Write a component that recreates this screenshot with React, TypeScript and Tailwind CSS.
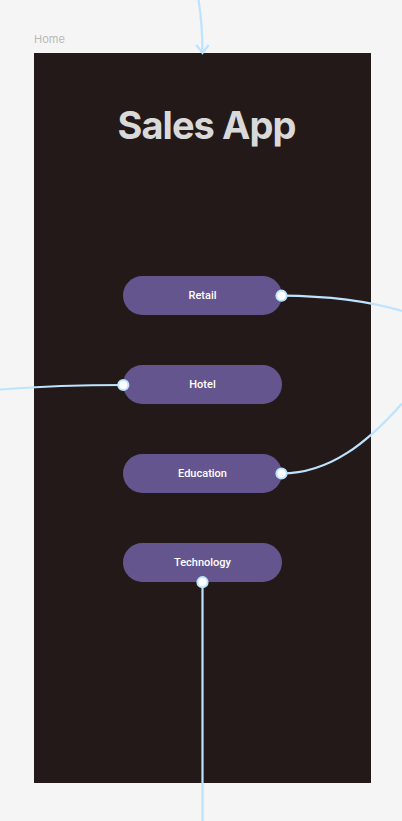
const categories = ["Retail", "Hotel", "Education", "Technology"];

const anchors = [
  { id: "retail", x: 281.5, y: 295.7 },
  { id: "hotel", x: 123.3, y: 385 },
  { id: "education", x: 281.5, y: 473.5 },
  { id: "technology", x: 202.5, y: 582.2 },
];

function Connectors() {
  return (
    <svg
      aria-hidden="true"
      className="pointer-events-none absolute top-0 left-1/2 h-[821px] w-[402px] -translate-x-1/2"
      viewBox="0 0 402 821"
      fill="none"
    >
      <g stroke="#bde3ff" strokeWidth="2.2">
        <path d="M198.5 0C201 15 202.5 32 202.5 53" />
        <path d="M196.3 45L202.5 53L208.7 45" />
        <path d="M281.5 295.7C325 296 368 301 402 311" />
        <path d="M123.3 385C80 385 40 386.5 0 389.5" />
        <path d="M281.5 473.5C330 473.5 368 442 402 403.5" />
        <path d="M202.5 582V821" />
      </g>
      {anchors.map((anchor) => (
        <circle
          key={anchor.id}
          cx={anchor.x}
          cy={anchor.y}
          r="5.1"
          fill="#ffffff"
          stroke="#bde3ff"
          strokeWidth="2"
        />
      ))}
    </svg>
  );
}

export default function App() {
  return (
    <div className="relative flex min-h-screen flex-col overflow-hidden bg-[#f5f5f5] pt-[31px] pr-[31px] pb-[38px] pl-[34px] font-['Inter',sans-serif]">
      <p className="pb-1.5 text-[11px] leading-4 text-[#b9b9b9]">Home</p>
      <main className="flex grow flex-col items-center bg-[#241919] pt-12">
        <h1 className="pl-2 text-[38px] leading-[48px] font-bold tracking-tight text-[#d9d9d9]">
          Sales App
        </h1>
        <nav aria-label="Categories" className="flex flex-col gap-[50px] pt-[127px]">
          {categories.map((category) => (
            <button
              key={category}
              type="button"
              className="h-[39px] w-[159px] rounded-full bg-[#65558f] pt-px font-['Roboto',sans-serif] text-[11px] leading-4 font-medium text-white"
            >
              {category}
            </button>
          ))}
        </nav>
      </main>
      <Connectors />
    </div>
  );
}
